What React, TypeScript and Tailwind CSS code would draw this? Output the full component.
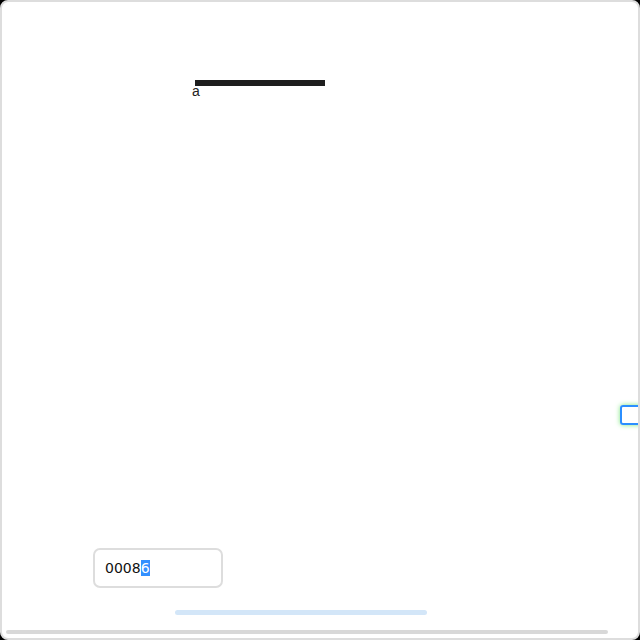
import React from "react";

const App: React.FC = () => {
  return (
    <div className="w-[640px] h-[640px] bg-black">
      <div className="relative flex flex-col w-full h-full bg-white border-2 border-[#dddddd] rounded-[8px] overflow-hidden font-['Liberation_Sans',sans-serif]">
        <div className="mt-[78px] ml-[193px] w-[130px] h-[6px] bg-[#1e1e1e]" />
        <p className="ml-[190px] text-[14px] leading-[11px] text-[#222]">a</p>

        <div className="flex-1" />

        <div className="ml-[91px] flex items-center w-[130px] h-[40px] px-[10px] border-2 border-[#dddddd] rounded-[7px] bg-white font-['DejaVu_Sans',sans-serif] text-[14px] text-[#111]">
          <span>0008</span>
          <span className="bg-[#3390ff] text-white leading-[16px]">6</span>
        </div>

        <div className="mt-[22px] ml-[173px] w-[252px] h-[5px] rounded-full bg-[#d3e6f8]" />
        <div className="mt-[15px] mb-[4px] ml-[4px] w-[602px] h-[4px] rounded-full bg-[#d8d8d8]" />

        <div className="absolute left-[618px] top-[403px] w-[24px] h-[20px] rounded-[3px] border-2 border-[#2b8fff] shadow-[0_0_5px_#7ee67e]" />
      </div>
    </div>
  );
};

export default App;
